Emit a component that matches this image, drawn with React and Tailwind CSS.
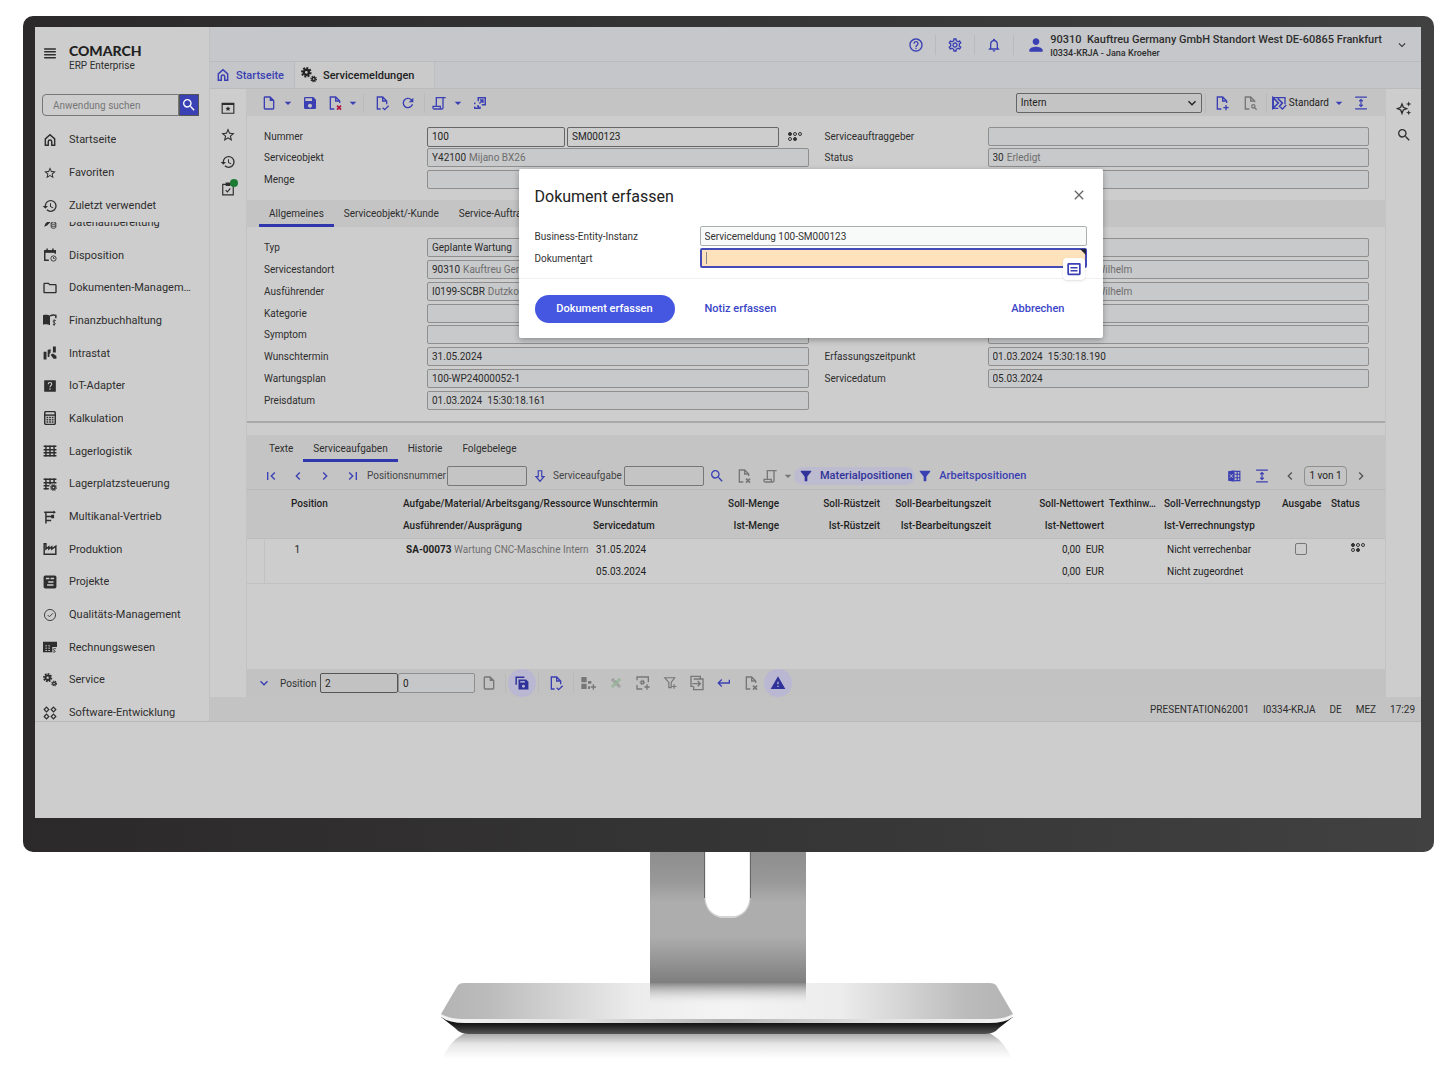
import React, { useState } from 'react';
import clsx from 'clsx';
import {
  MdArrowDropDown,
  MdChevronLeft,
  MdChevronRight,
  MdClose,
  MdExpandMore,
  MdFilterAlt,
  MdFirstPage,
  MdHelpOutline,
  MdHistory,
  MdKeyboardReturn,
  MdLastPage,
  MdNotificationsNone,
  MdOutlineFolder,
  MdOutlineInsertDriveFile,
  MdOutlineSettings,
  MdPerson,
  MdRefresh,
  MdSave,
  MdSearch,
  MdStarBorder,
  MdWarning,
} from 'react-icons/md';

function Gear({ cx, cy, r }) {
  return (
    <g fill="none">
      <circle cx={cx} cy={cy} r={r * 0.8} strokeWidth={r * 0.75} />
      <circle cx={cx} cy={cy} r={r * 1.35} strokeWidth={r * 0.6} pathLength="16" strokeDasharray="1.2 0.8" />
    </g>
  );
}

// all glyphs live on a 24 x 24 grid
const glyphs = {
  menu: <path d="M2 5h20M2 10h20M2 15h20M2 20h20" />,
  home: <path d="M4 21V10l8-7 8 7v11h-5v-6a3 3 0 0 0-6 0v6z" />,
  dataPrep: (
    <>
      <path d="M2 20l2-5L13 6l3 3-9 9z" fill="currentColor" stroke="none" />
      <ellipse cx="18" cy="14" rx="4" ry="2" strokeWidth="1.500" />
      <path d="M14 14v7c0 2.400 8 2.400 8 0v-7M14 18c0 2 8 2 8 0" strokeWidth="1.500" />
    </>
  ),
  calendarClock: (
    <>
      <path d="M10 21H3V5h18v5M7 1v4M17 1v4" />
      <path d="M3 5h18v2H3z" fill="currentColor" />
      <circle cx="18" cy="18" r="4.500" strokeWidth="1.500" />
      <path d="M18 15.500V18h2" strokeWidth="1.500" />
    </>
  ),
  ledger: (
    <>
      <path d="M0 4c4-1.500 9-1 12 1v16c-3-2-8-2-12-1z" fill="currentColor" stroke="none" />
      <path d="M12 5c3-1.500 6-2 10-1v5" />
      <path d="M22 13c-4-2-6 2-3 3s3 5-2 3.500M19 11v11" strokeWidth="1.500" />
    </>
  ),
  intrastat: (
    <g fill="currentColor" stroke="none">
      <path d="M1 10h5v13H1zM8 7l5-2v6l-2 3v5H8zM17 1h5v10h-5zM13 15l4-2 6 4v5h-5z" />
    </g>
  ),
  question: (
    <>
      <rect x="2" y="2" width="20" height="20" rx="1" fill="currentColor" stroke="none" />
      <path d="M9 9c0-4 6-4 6 0 0 2-3 2-3 5M12 16v2.500" stroke="#cdcdcd" strokeWidth="2" />
    </>
  ),
  calculator: (
    <>
      <rect x="3" y="1" width="18" height="22" rx="2" />
      <path d="M3 7h18" />
      <path d="M6 11h12M6 15h12M6 19h12" strokeDasharray="3 1.500" strokeWidth="2.500" />
    </>
  ),
  grid: <path d="M5 2v20M12 2v20M19 2v20M1 4h22M1 10h22M1 15h22M1 20h22" />,
  gridGear: (
    <>
      <path d="M5 2v20M12 2v11M19 2v9M1 4h22M1 10h22M1 15h10M1 20h9" />
      <Gear cx={18} cy={18} r={3.500} />
    </>
  ),
  tree: (
    <>
      <path d="M5 3v20M2 4h18M5 11h11M5 18h9" />
      <path d="M18 1l4 3-4 3zM14 8h5v6h-5z" fill="currentColor" stroke="none" />
    </>
  ),
  factory: <path d="M2 3h3v9l5-4v4l5-4v4l7-5v14H2z" />,
  projects: (
    <>
      <rect x="1" y="1" width="22" height="22" rx="3" fill="currentColor" stroke="none" />
      <path d="M5 6h6M13 6h6M9 12h9M7 17h11" stroke="#cdcdcd" strokeWidth="2.500" />
    </>
  ),
  quality: (
    <>
      <circle cx="12" cy="12" r="9.500" strokeWidth="1.500" />
      <path d="M8 12l3 3 6-6" strokeWidth="1.500" />
    </>
  ),
  accounting: (
    <>
      <path d="M0 3h24v9h-8v9H0z" fill="currentColor" stroke="none" />
      <path d="M4 10h3M9 10h3M4 14h3M9 14h3M4 18h3M9 18h3" stroke="#cdcdcd" strokeWidth="1.500" />
      <path d="M22 15c-4-1.500-6 1.500-3 2.500s3 4-2 3" strokeWidth="1.500" />
    </>
  ),
  gears: (
    <>
      <Gear cx={8} cy={8} r={4.800} />
      <Gear cx={19} cy={18} r={3} />
    </>
  ),
  modules: (
    <g strokeWidth="2">
      <path d="M6 2l4 4-4 4-4-4zM18 2l4 4-4 4-4-4zM6 14l4 4-4 4-4-4zM18 14l4 4-4 4-4-4z" />
    </g>
  ),
  windowStar: (
    <>
      <path d="M2 4h20v17H2zM2 6h20" />
      <path d="M12 9l1.300 2.700 3 .3-2.200 2 .6 3-2.700-1.500L9.300 17l.6-3-2.200-2 3-.3z" fill="currentColor" stroke="none" />
    </>
  ),
  clipboard: (
    <>
      <path d="M3 4h18v18H3zM9 2h6v4H9z" />
      <path d="M8 14l3 3 5-6" />
    </>
  ),
  fileX: (
    <>
      <path d="M11 21H5V3h8l6 6v3M13 3v6h6" />
      <path d="M15 16l6 6M21 16l-6 6" className="stroke-(--mark)" strokeWidth="2.500" />
    </>
  ),
  fileCheck: <path d="M10 21H5V3h8l6 6v5M13 3v6h6M13 19l3 3 6-6" />,
  filePlus: <path d="M11 21H5V3h8l6 6v3M13 3v6h6M18 15v8M14 19h8" />,
  fileSearch: (
    <>
      <path d="M11 21H5V3h8l6 6v2M13 3v6h6M19 19l3 3" />
      <circle cx="17" cy="17" r="2.500" />
    </>
  ),
  scroll: <path d="M8 17V4h14M18 4v15a2 2 0 0 1-2 2H5a2 2 0 0 1-2-2v-2h11v4" />,
  popOut: <path d="M9 9V3h12v12h-6M11 13l6-6M12 7h5v5M3 11v3M3 18v3h6v-4H7M9 21h3v-3" />,
  fitHeight: <path d="M2 2h20M2 22h20M12 6v12M9 9l3-3 3 3M9 15l3 3 3-3" />,
  layout: (
    <>
      <path d="M3 4h18v10M3 4v16h8M14 18l3 3 6-6" />
      <path d="M3 4l8 8-8 8zM10 5l7 7-5 6" strokeWidth="2.500" />
    </>
  ),
  funnelPlus: <path d="M3 3h17l-6 8v9h-4v-9zM19 14v8M15 18h8" />,
  sparkles: (
    <>
      <path d="M9 6l2 5 5 2-5 2-2 5-2-5-5-2 5-2z" />
      <path d="M19 2l1 3 3 1-3 1-1 3-1-3-3-1 3-1zM19 15l1 3 3 1-3 1-1 3-1-3-3-1 3-1z" fill="currentColor" stroke="none" />
    </>
  ),
  arrowDown: <path d="M9 3h6v10h4l-7 8-7-8h4z" />,
  excel: (
    <>
      <path d="M2 4l11-2v20L2 20z" fill="currentColor" stroke="none" />
      <path d="M13 4h9v16h-9M13 9h9M13 15h9M17.500 4v16" />
      <path d="M5 9l5 6M10 9l-5 6" stroke="#c4c4c4" strokeWidth="1.500" />
    </>
  ),
  saveAll: (
    <>
      <path d="M2 15V2h14" strokeWidth="2.500" />
      <path d="M6 6h13l4 4v13H6z" fill="currentColor" stroke="none" />
      <path d="M9 10h8" stroke="#bab7d2" strokeWidth="2.500" />
      <circle cx="14.500" cy="17.500" r="2.500" fill="#bab7d2" stroke="none" />
    </>
  ),
  blocksPlus: (
    <>
      <path d="M2 3h8v8H2zM2 13h8v8H2zM12 9h5v4h-5zM12 17h3v4h-3z" fill="currentColor" stroke="none" />
      <path d="M20 14v8M16 18h8" />
    </>
  ),
  cross: (
    <>
      <path d="M4 4l16 16" stroke="#9a9a9a" strokeWidth="6" strokeDasharray="4 1" />
      <path d="M20 4L4 20" stroke="#93b394" strokeWidth="6" strokeDasharray="4 1" />
    </>
  ),
  gearPlus: (
    <>
      <path d="M3 8V3h17v8M3 15v6h8M18 14v8M14 18h8" />
      <Gear cx={11} cy={11} r={2.500} />
    </>
  ),
  copyInto: <path d="M17 5V2H3v15h3M7 6h14v16H7v-5M5 13h11M13 9l4 4-4 4" />,
  list: (
    <>
      <rect x="2" y="3" width="20" height="18" rx="1" strokeWidth="3" />
      <path d="M6 10h12M6 15h12" strokeWidth="2.500" />
    </>
  ),
};

function Icon({ name, className = 'size-4' }) {
  return (
    <svg viewBox="0 0 24 24" fill="none" stroke="currentColor" strokeWidth="2" className={clsx('shrink-0', className)} aria-hidden="true">
      {glyphs[name]}
    </svg>
  );
}

function StatusDots() {
  return (
    <svg viewBox="0 0 14 9" className="h-[9px] w-3.5 shrink-0" fill="none" stroke="#333" aria-hidden="true">
      <circle cx="2" cy="2" r="1.500" fill="#333" />
      <circle cx="7" cy="2" r="1.500" />
      <circle cx="12" cy="2" r="1.500" />
      <circle cx="2" cy="7" r="1.500" />
      <circle cx="7" cy="7" r="1.500" fill="#333" />
    </svg>
  );
}

function ToolButton({ label, className = 'w-7', children }) {
  return (
    <button type="button" aria-label={label} className={clsx('flex shrink-0 items-center justify-center', className)}>
      {children}
    </button>
  );
}

function Separator() {
  return <span className="h-5 w-px shrink-0 bg-[#bababa]" />;
}

const topLinks = [
  { label: 'Startseite', icon: <Icon name="home" className="size-3.5 stroke-[2.5]" /> },
  { label: 'Favoriten', icon: <MdStarBorder className="size-3.5" /> },
  { label: 'Zuletzt verwendet', icon: <MdHistory className="size-4 shrink-0" /> },
];

const modules = [
  { label: 'Datenaufbereitung', icon: 'dataPrep' },
  { label: 'Disposition', icon: 'calendarClock' },
  { label: 'Dokumenten-Management', icon: 'folder' },
  { label: 'Finanzbuchhaltung', icon: 'ledger' },
  { label: 'Intrastat', icon: 'intrastat' },
  { label: 'IoT-Adapter', icon: 'question' },
  { label: 'Kalkulation', icon: 'calculator' },
  { label: 'Lagerlogistik', icon: 'grid' },
  { label: 'Lagerplatzsteuerung', icon: 'gridGear' },
  { label: 'Multikanal-Vertrieb', icon: 'tree' },
  { label: 'Produktion', icon: 'factory' },
  { label: 'Projekte', icon: 'projects' },
  { label: 'Qualitäts-Management', icon: 'quality' },
  { label: 'Rechnungswesen', icon: 'accounting' },
  { label: 'Service', icon: 'gears' },
  { label: 'Software-Entwicklung', icon: 'modules' },
];

function NavLink({ label, icon }) {
  return (
    <a href="#" className="flex items-center gap-3 pr-3.5 pl-2">
      <span className="flex w-3.5 shrink-0 justify-center">{icon}</span>
      <span className="truncate pt-px leading-4">{label}</span>
    </a>
  );
}

function Sidebar() {
  return (
    <aside className="flex w-[175px] shrink-0 flex-col border-r border-[#bfc0c2] text-[11px] text-[#2e2e2e]">
      <div className="flex gap-3 pt-4 pl-2">
        <ToolButton label="Menü" className="mt-[3px] size-3.5">
          <Icon name="menu" className="size-3.5 stroke-[2.5]" />
        </ToolButton>
        <div>
          <div className="font-[Lato,sans-serif] text-[14px] leading-4 font-black text-[#222]">COMARCH</div>
          <div className="text-[10px] leading-[14px]">ERP Enterprise</div>
        </div>
      </div>
      <form className="mt-[21px] mr-2.5 ml-[7px] flex h-[22px]" onSubmit={(e) => e.preventDefault()}>
        <input
          type="text"
          aria-label="Anwendung suchen"
          placeholder="Anwendung suchen"
          className="min-w-0 flex-1 rounded-l-sm border border-[#777] px-2.5 text-[10px] placeholder:text-[#777]"
        />
        <button type="submit" aria-label="Suchen" className="flex w-5 items-center justify-center border border-[#555] bg-[#3a41b4] text-white">
          <MdSearch className="size-4" />
        </button>
      </form>
      <nav className="mt-[7px] grid h-[99px] shrink-0 auto-rows-fr grid-cols-1">
        {topLinks.map((link) => (
          <NavLink key={link.label} {...link} />
        ))}
      </nav>
      {/* the module list is scrolled a little, so its first row is cut off */}
      <div className="h-0 grow overflow-hidden">
        <nav className="-mt-4 grid h-[523px] auto-rows-fr grid-cols-1">
          {modules.map(({ label, icon }) => (
            <NavLink
              key={label}
              label={label}
              icon={icon === 'folder' ? <MdOutlineFolder className="size-4 shrink-0" /> : <Icon name={icon} className="size-3.5 stroke-[2.5]" />}
            />
          ))}
        </nav>
      </div>
    </aside>
  );
}

function TopBar() {
  return (
    <header className="flex h-[35px] items-center justify-end border-b border-[#b9bbbe] bg-[#c5c7ca] pt-0.5 text-[#3a3fb3]">
      <ToolButton label="Hilfe" className="w-[38px]">
        <MdHelpOutline className="size-4" />
      </ToolButton>
      <Separator />
      <ToolButton label="Einstellungen" className="w-[38px]">
        <MdOutlineSettings className="size-4" />
      </ToolButton>
      <Separator />
      <ToolButton label="Benachrichtigungen" className="w-[38px]">
        <MdNotificationsNone className="size-4" />
      </ToolButton>
      <Separator />
      <MdPerson className="ml-3 size-5 shrink-0" />
      <div className="ml-1 pt-0.5 font-medium text-[#2e2e2e]">
        <div className="text-[11px] leading-[14px] whitespace-pre">90310  Kauftreu Germany GmbH Standort West DE-60865 Frankfurt</div>
        <div className="text-[9px] leading-3">I0334-KRJA - Jana Kroeher</div>
      </div>
      <ToolButton label="Benutzermenü" className="w-[39px] text-[#333]">
        <MdExpandMore className="size-3.5" />
      </ToolButton>
    </header>
  );
}

function WindowTabs() {
  return (
    <nav className="flex h-[27px] border-b border-[#b9bbbe] bg-[#c4c6c9] text-[11px] font-medium">
      <a href="#" className="flex w-[85px] items-center gap-1.5 border-r border-[#b9bbbe] pl-1.5 text-[#3a3fb3]">
        <Icon name="home" className="size-3.5 stroke-[2.5]" />
        <span className="pt-0.5 leading-4">Startseite</span>
      </a>
      <a href="#" className="flex w-[140px] items-center gap-1.5 border-r border-[#bfc0c2] bg-[#cacaca] pl-1.5 text-[#222]">
        <Icon name="gears" className="size-4" />
        <span className="pt-0.5 leading-4">Servicemeldungen</span>
      </a>
    </nav>
  );
}

function FormToolbar() {
  const [view, setView] = useState('Intern');

  return (
    <div className="flex h-[27px] items-center bg-[#c4c4c4] pl-2 text-[#3a3fb3]">
      <ToolButton label="Neu"><MdOutlineInsertDriveFile className="size-4" /></ToolButton>
      <ToolButton label="Neu, Optionen" className="w-2.5"><MdArrowDropDown className="size-4 shrink-0" /></ToolButton>
      <ToolButton label="Speichern" className="w-[34px]"><MdSave className="size-4" /></ToolButton>
      <ToolButton label="Löschen" className="w-4 [--mark:#b3123c]"><Icon name="fileX" /></ToolButton>
      <ToolButton label="Löschen, Optionen" className="w-5"><MdArrowDropDown className="size-4" /></ToolButton>
      <Separator />
      <ToolButton label="Prüfen" className="w-9"><Icon name="fileCheck" /></ToolButton>
      <ToolButton label="Aktualisieren" className="mr-2 w-4"><MdRefresh className="size-4" /></ToolButton>
      <Separator />
      <ToolButton label="Ausgabe"><Icon name="scroll" /></ToolButton>
      <ToolButton label="Ausgabe, Optionen" className="w-2.5"><MdArrowDropDown className="size-4 shrink-0" /></ToolButton>
      <ToolButton label="Absprung" className="w-[34px]"><Icon name="popOut" className="size-3.5 stroke-[2.5]" /></ToolButton>

      <div className="relative mr-[3px] ml-auto">
        <select
          aria-label="Ansicht"
          value={view}
          onChange={(e) => setView(e.target.value)}
          className="block h-5 w-[186px] appearance-none rounded-xs border border-[#666] px-1 text-[10px] text-[#222]"
        >
          <option>Intern</option>
        </select>
        <MdExpandMore className="pointer-events-none absolute top-0.5 right-0.5 size-4 text-[#222]" />
      </div>
      <Separator />
      <ToolButton label="Ansicht anlegen" className="w-8"><Icon name="filePlus" /></ToolButton>
      <ToolButton label="Ansicht suchen" className="w-6 text-[#777]"><Icon name="fileSearch" /></ToolButton>
      <span className="w-1" />
      <Separator />
      <button type="button" className="ml-1 flex items-center gap-0.5 text-[10px]">
        <Icon name="layout" />
        <span className="text-[#222]">Standard</span>
        <MdArrowDropDown className="size-4" />
      </button>
      <ToolButton label="Höhe anpassen" className="mr-2.5 w-7"><Icon name="fitHeight" className="size-3.5" /></ToolButton>
    </div>
  );
}

const boxStyle = 'h-[19px] rounded-xs border border-[#8f8f8f] bg-[#c8c9ca] px-1';

// a code followed by its grey description, or a plain value
function Field({ id, label, code, text, hint, offset }) {
  return (
    <>
      <label htmlFor={id}>{label}</label>
      <div className={clsx(boxStyle, 'flex items-center gap-[3px] overflow-hidden whitespace-nowrap', offset)}>
        {code ? (
          <>
            <input id={id} readOnly defaultValue={code} aria-label={hint} className="field-sizing-content text-[#2b2b2b]" />
            <span className="text-[#6d6d6d]">{text}</span>
          </>
        ) : (
          <input id={id} readOnly defaultValue={text} aria-label={hint} className={clsx('w-full min-w-0', offset ? 'text-[#6d6d6d]' : 'text-[#2b2b2b]')} />
        )}
      </div>
    </>
  );
}

const headLeft = [
  { id: 'serviceobjekt', label: 'Serviceobjekt', code: 'Y42100', text: 'Mijano BX26' },
  { id: 'menge', label: 'Menge' },
];

const headRight = [
  { id: 'auftraggeber', label: 'Serviceauftraggeber' },
  { id: 'status', label: 'Status', code: '30', text: 'Erledigt' },
  { id: 'status-zusatz', hint: 'Status' },
];

const detailLeft = [
  { id: 'typ', label: 'Typ', text: 'Geplante Wartung' },
  { id: 'standort', label: 'Servicestandort', code: '90310', text: 'Kauftreu Germany GmbH' },
  { id: 'ausfuehrender', label: 'Ausführender', code: 'I0199-SCBR', text: 'Dutzkow' },
  { id: 'kategorie', label: 'Kategorie' },
  { id: 'symptom', label: 'Symptom' },
  { id: 'wunschtermin', label: 'Wunschtermin', text: '31.05.2024' },
  { id: 'wartungsplan', label: 'Wartungsplan', text: '100-WP24000052-1' },
  { id: 'preisdatum', label: 'Preisdatum', text: '01.03.2024  15:30:18.161' },
];

const detailRight = [
  { id: 'typ-2', hint: 'Typ' },
  { id: 'standort-2', hint: 'Servicestandort', text: 'Wilhelm', offset: 'pl-[108px]' },
  { id: 'ausfuehrender-2', hint: 'Ausführender', text: 'Wilhelm', offset: 'pl-[108px]' },
  { id: 'kategorie-2', hint: 'Kategorie' },
  { id: 'symptom-2', hint: 'Symptom' },
  { id: 'erfassung', label: 'Erfassungszeitpunkt', text: '01.03.2024  15:30:18.190' },
  { id: 'servicedatum', label: 'Servicedatum', text: '05.03.2024' },
];

function TabBar({ tabs, active, onChange, label }) {
  return (
    <div role="tablist" aria-label={label} className="flex h-[27px] bg-[#c4c4c4] pl-3">
      {tabs.map((tab) => (
        <button
          key={tab}
          type="button"
          role="tab"
          aria-selected={tab === active}
          onClick={() => onChange(tab)}
          className={clsx('border-b-3 px-2.5 pt-[3px] whitespace-nowrap', tab === active ? 'border-[#3036ab]' : 'border-transparent')}
        >
          {tab}
        </button>
      ))}
    </div>
  );
}

function HeadForm() {
  return (
    <div className="grid grid-cols-2 gap-x-4 py-2.5 pr-4 pl-[17px]">
      <div className="grid h-16 auto-rows-fr grid-cols-[163px_1fr] items-center">
        <label htmlFor="nummer">Nummer</label>
        <div className="flex items-center gap-0.5">
          <input id="nummer" defaultValue="100" className="h-5 w-[138px] rounded-xs border border-[#666] px-1 text-[#222]" />
          <input aria-label="Nummer, laufend" defaultValue="SM000123" className="h-5 min-w-0 flex-1 rounded-xs border border-[#666] px-1 text-[#222]" />
          <span className="flex w-7 justify-center"><StatusDots /></span>
        </div>
        {headLeft.map((field) => <Field key={field.id} {...field} />)}
      </div>
      <div className="grid h-16 auto-rows-fr grid-cols-[163px_1fr] items-center">
        {headRight.map((field) => <Field key={field.id} {...field} />)}
      </div>
    </div>
  );
}

function DetailForm() {
  return (
    <div className="grid grid-cols-2 gap-x-4 py-2.5 pr-4 pl-[17px]">
      <div className="grid h-[174px] grid-cols-[163px_1fr] grid-rows-8 items-center">
        {detailLeft.map((field) => <Field key={field.id} {...field} />)}
      </div>
      <div className="grid h-[174px] grid-cols-[163px_1fr] grid-rows-8 items-center">
        {detailRight.map((field) => <Field key={field.id} {...field} />)}
      </div>
    </div>
  );
}

function ListToolbar() {
  return (
    <div className="flex h-7 items-center border-b border-[#b9babb] bg-[#c4c4c4] pl-2.5 text-[#3a3fb3]">
      <ToolButton label="Erste"><MdFirstPage className="size-4" /></ToolButton>
      <ToolButton label="Vorherige" className="w-[26px]"><MdChevronLeft className="size-4" /></ToolButton>
      <ToolButton label="Nächste"><MdChevronRight className="size-4" /></ToolButton>
      <ToolButton label="Letzte"><MdLastPage className="size-4" /></ToolButton>
      <label htmlFor="positionsnummer" className="w-20 shrink-0 text-[#444]">Positionsnummer</label>
      <input id="positionsnummer" className="h-5 w-20 shrink-0 rounded-xs border border-[#777]" />
      <ToolButton label="Gehe zu" className="w-[26px]"><Icon name="arrowDown" className="size-3.5" /></ToolButton>
      <label htmlFor="serviceaufgabe" className="w-[71px] shrink-0 text-[#444]">Serviceaufgabe</label>
      <input id="serviceaufgabe" className="h-5 w-20 shrink-0 rounded-xs border border-[#777]" />
      <ToolButton label="Suchen" className="w-[26px]"><MdSearch className="size-4" /></ToolButton>
      <ToolButton label="Position löschen" className="w-7 text-[#777] [--mark:#777]"><Icon name="fileX" /></ToolButton>
      <ToolButton label="Ausgabe" className="w-6 text-[#777]"><Icon name="scroll" /></ToolButton>
      <ToolButton label="Ausgabe, Optionen" className="w-3 text-[#777]"><MdArrowDropDown className="size-4 shrink-0" /></ToolButton>
      <button type="button" className="flex h-[18px] items-center gap-1.5 rounded-full bg-[#bdbbd0] pr-[3px] pl-1 text-[11px] font-medium text-[#2f3399]">
        <MdFilterAlt className="size-4" />
        <span className="pt-px leading-4">Materialpositionen</span>
      </button>
      <button type="button" className="ml-0.5 flex items-center gap-1.5 text-[11px] font-medium">
        <MdFilterAlt className="size-4" />
        <span className="pt-px leading-4">Arbeitspositionen</span>
      </button>
      <ToolButton label="Excel-Export" className="ml-auto w-7"><Icon name="excel" className="size-3.5" /></ToolButton>
      <ToolButton label="Höhe anpassen"><Icon name="fitHeight" className="size-3.5" /></ToolButton>
      <ToolButton label="Vorherige Seite" className="w-7 text-[#555]"><MdChevronLeft className="size-4" /></ToolButton>
      <span className="flex h-5 w-[43px] items-center justify-center rounded-sm border border-[#8f8f8f] text-[#222]">1 von 1</span>
      <ToolButton label="Nächste Seite" className="mr-2.5 w-7 text-[#555]"><MdChevronRight className="size-4" /></ToolButton>
    </div>
  );
}

const columns = [
  { key: 'handle', width: 'w-[17px]' },
  { key: 'position', width: 'w-[139px]', head: ['Position'], cell: 'text-left pl-[27px]' },
  { key: 'aufgabe', width: 'w-[190px]', head: ['Aufgabe/Material/Arbeitsgang/Ressource', 'Ausführender/Ausprägung'] },
  { key: 'termin', width: 'w-[98px]', head: ['Wunschtermin', 'Servicedatum'] },
  { key: 'menge', width: 'w-[88px]', head: ['Soll-Menge', 'Ist-Menge'], cell: 'text-right' },
  { key: 'ruestzeit', width: 'w-[101px]', head: ['Soll-Rüstzeit', 'Ist-Rüstzeit'], cell: 'text-right' },
  { key: 'bearbeitung', width: 'w-[111px]', head: ['Soll-Bearbeitungszeit', 'Ist-Bearbeitungszeit'], cell: 'text-right' },
  { key: 'nettowert', width: 'w-[113px]', head: ['Soll-Nettowert', 'Ist-Nettowert'], cell: 'text-right' },
  { key: 'text', width: 'w-[60px]', head: ['Texthinw…'], cell: 'text-left pl-[5px]' },
  { key: 'verrechnung', width: 'w-[118px]', head: ['Soll-Verrechnungstyp', 'Ist-Verrechnungstyp'] },
  { key: 'ausgabe', width: 'w-[38px]', head: ['Ausgabe'], cell: 'text-center' },
  { key: 'status', width: 'w-[65px]', head: ['Status'], cell: 'text-left pl-[11px]' },
];

function PositionTable() {
  return (
    <div className="min-h-[179px]">
      <table className="w-full table-fixed leading-[22px] whitespace-nowrap text-[#1f1f1f]">
        <thead>
          <tr className="border-b border-[#bcbcbc] bg-[#c4c4c4] align-top">
            {columns.map(({ key, width, head = [], cell = 'text-left' }) => (
              <th key={key} scope="col" className={clsx('pt-[3px] pb-px font-medium', width, cell)}>
                {head.map((line) => <div key={line}>{line}</div>)}
              </th>
            ))}
          </tr>
        </thead>
        <tbody>
          <tr className="border-b border-[#bfc1c3] align-top">
            <td className="border-r border-[#bfc1c3]" />
            <td className="pl-[30px]">1</td>
            <td className="pl-[3px]">
              <span className="font-bold">SA-00073</span> <span className="text-[#6d6d6d]">Wartung CNC-Maschine Intern</span>
            </td>
            <td className="pl-[3px]">31.05.2024<br />05.03.2024</td>
            <td />
            <td />
            <td />
            <td className="text-right whitespace-pre">{'0,00  EUR\n0,00  EUR'}</td>
            <td />
            <td className="pl-[3px]">Nicht verrechenbar<br />Nicht zugeordnet</td>
            <td>
              <input
                type="checkbox"
                aria-label="Ausgabe"
                className="mx-auto mt-1 block size-3 appearance-none rounded-xs border border-[#777]"
              />
            </td>
            <td><span className="flex justify-center pt-1 pl-2.5"><StatusDots /></span></td>
          </tr>
        </tbody>
      </table>
    </div>
  );
}

function PositionBar() {
  return (
    <div className="flex h-7 items-center bg-[#c2c2c2] pl-[3px] text-[#777] [--mark:#777]">
      <ToolButton label="Aufklappen" className="w-7 text-[#3a3fb3]"><MdExpandMore className="size-4" /></ToolButton>
      <label htmlFor="position" className="w-[42px] pl-0.5 text-[#333]">Position</label>
      <input id="position" defaultValue="2" className="h-5 w-[78px] rounded-xs border border-[#555] px-1 text-[#222]" />
      <input aria-label="Unterposition" defaultValue="0" className="h-5 w-[77px] rounded-xs border border-[#8f8f8f] bg-[#c6c7c8] px-1 text-[#222]" />
      <ToolButton label="Neu"><MdOutlineInsertDriveFile className="size-4" /></ToolButton>
      <span className="w-0.5" />
      <Separator />
      <ToolButton label="Alle speichern" className="mx-0.5 size-7 rounded-full bg-[#bab7d2] text-[#2f3399]"><Icon name="saveAll" className="size-3.5" /></ToolButton>
      <Separator />
      <ToolButton label="Prüfen" className="w-[34px] text-[#3a3fb3]"><Icon name="fileCheck" /></ToolButton>
      <Separator />
      <ToolButton label="Struktur einfügen"><Icon name="blocksPlus" /></ToolButton>
      <ToolButton label="Struktur lösen"><Icon name="cross" className="size-3" /></ToolButton>
      <ToolButton label="Arbeitsgang einfügen" className="w-[26px]"><Icon name="gearPlus" /></ToolButton>
      <ToolButton label="Filter einfügen"><Icon name="funnelPlus" className="size-3.5" /></ToolButton>
      <ToolButton label="Kopieren" className="w-[26px]"><Icon name="copyInto" /></ToolButton>
      <ToolButton label="Übernehmen" className="w-7 text-[#3a3fb3]"><MdKeyboardReturn className="size-4" /></ToolButton>
      <ToolButton label="Löschen" className="w-[26px]"><Icon name="fileX" /></ToolButton>
      <ToolButton label="Meldungen" className="size-7 rounded-full bg-[#bab7d2] text-[#2f3399]"><MdWarning className="size-4" /></ToolButton>
    </div>
  );
}

function DocumentDialog() {
  return (
    <div className="pointer-events-none absolute inset-0 flex items-start justify-center pt-[142px] pr-2.5">
      <div
        role="dialog"
        aria-labelledby="dialog-title"
        className="pointer-events-auto w-[584px] rounded-xs bg-white text-[10px] text-[#333] shadow-[0_2px_6px_rgba(0,0,0,0.3)]"
      >
        <div className="flex items-center justify-between px-4 pt-4">
          <h2 id="dialog-title" className="text-[16px] leading-6 text-[#222]">Dokument erfassen</h2>
          <ToolButton label="Schließen" className="mb-1 size-4 text-[#666]"><MdClose className="size-4" /></ToolButton>
        </div>
        <div className="grid grid-cols-[165px_1fr] items-center gap-y-0.5 border-b border-[#f0f0f0] px-4 pt-[17px] pb-2.5">
          <label htmlFor="entity">Business-Entity-Instanz</label>
          <input id="entity" readOnly defaultValue="Servicemeldung 100-SM000123" className="h-5 rounded-xs border border-[#aab0b0] bg-[#f8faf9] px-1" />
          <label htmlFor="dokumentart">Dokument<u>a</u>rt</label>
          <div className="relative flex h-5 items-center rounded-xs border-2 border-[#444bb8] bg-[#fde2bb] px-1">
            <span className="h-3 w-px bg-[#888]" />
            <input id="dokumentart" className="h-full w-full outline-none" />
            <svg viewBox="0 0 6 6" className="absolute -top-px -right-px size-1.5" aria-hidden="true">
              <path d="M0 0h6v6z" fill="#22253a" />
            </svg>
            <button type="button" aria-label="Auswahlliste" className="absolute top-2 right-0 flex size-[22px] items-center justify-center rounded-sm bg-white text-[#3a3fb3] shadow-sm">
              <Icon name="list" className="size-3.5" />
            </button>
          </div>
        </div>
        <div className="flex items-center px-4 pt-4 pb-[15px] text-[11px] font-medium text-[#3a46c8]">
          <button type="button" className="h-7 w-[140px] rounded-full bg-[#4557e0] text-white">Dokument erfassen</button>
          <button type="button" className="ml-[30px]">Notiz erfassen</button>
          <button type="button" className="mr-[22px] ml-auto">Abbrechen</button>
        </div>
      </div>
    </div>
  );
}

function StatusBar() {
  return (
    <footer className="flex h-6 items-center justify-end gap-3.5 bg-[#c3c3c3] pr-1.5">
      <span>PRESENTATION62001</span>
      <span>I0334-KRJA</span>
      <span>DE</span>
      <span>MEZ</span>
      <span>17:29</span>
    </footer>
  );
}

function Stand() {
  return (
    <svg viewBox="0 0 620 228" className="mx-auto block w-[620px] max-w-full" aria-hidden="true">
      <defs>
        <linearGradient id="neck" x1="0" y1="0" x2="0" y2="1">
          <stop offset="0" stopColor="#8e8e8e" />
          <stop offset="0.220" stopColor="#989898" />
          <stop offset="0.380" stopColor="#adadad" />
          <stop offset="0.640" stopColor="#adadad" />
          <stop offset="1" stopColor="#7d7d7d" />
        </linearGradient>
        <linearGradient id="plate" x1="0" y1="0" x2="1" y2="0">
          <stop offset="0" stopColor="#b4b4b4" />
          <stop offset="0.080" stopColor="#bbb" />
          <stop offset="0.340" stopColor="#ececec" />
          <stop offset="0.500" stopColor="#f4f4f4" />
          <stop offset="0.700" stopColor="#ececec" />
          <stop offset="0.920" stopColor="#bbb" />
          <stop offset="1" stopColor="#b4b4b4" />
        </linearGradient>
        <linearGradient id="mirror" x1="0" y1="0" x2="0" y2="1">
          <stop offset="0" stopColor="#888" />
          <stop offset="1" stopColor="#eee" stopOpacity="0" />
        </linearGradient>
        <linearGradient id="edge" x1="0" y1="0" x2="1" y2="0">
          <stop offset="0" stopColor="#f4f4f4" />
          <stop offset="0.250" stopColor="#e0e0e0" />
          <stop offset="0.500" stopColor="#b5b5b5" />
          <stop offset="0.750" stopColor="#e0e0e0" />
          <stop offset="1" stopColor="#f4f4f4" />
        </linearGradient>
        <linearGradient id="under" x1="0" y1="0" x2="0" y2="1">
          <stop offset="0.400" stopColor="#161616" />
          <stop offset="1" stopColor="#555" />
        </linearGradient>
        <linearGradient id="shade" x1="0" y1="0" x2="0" y2="1">
          <stop offset="0" stopColor="#aaa" />
          <stop offset="0.400" stopColor="#e6e6e6" />
          <stop offset="1" stopColor="#fff" />
        </linearGradient>
      </defs>
      <path d="M233 0h156v132H233z" fill="url(#neck)" />
      <path d="M287.500 0v46q1 16 16 20h14q15-4 16-20V0z" fill="#d4d4d4" />
      <path d="M288.500 0v46q1 14 14 18h16q13-4 14-18V0z" fill="#fff" />
      <path d="M287.500 0v46M333.500 0v46" stroke="#666" />
      <path d="M46 182h528q14 8 21 25H25q7-17 21-25z" fill="url(#shade)" />
      <path d="M24 165l14 11q5 6 14 6h516q9 0 14-6l14-11z" fill="url(#under)" />
      <path d="M24 161v4q8 6 24 6h524q16 0 24-6v-4z" fill="url(#edge)" />
      <path d="M41 133q2-2 6-2h526q4 0 6 2l17 29q-8 5-22 5H46q-14 0-22-5z" fill="url(#plate)" />
      <path d="M233 131h156v22H233z" fill="url(#mirror)" />
    </svg>
  );
}

function App() {
  const [formTab, setFormTab] = useState('Allgemeines');
  const [listTab, setListTab] = useState('Serviceaufgaben');

  return (
    <div className="min-h-screen bg-white pt-4 font-[Roboto,sans-serif]">
      <div className="mr-5 ml-[23px] rounded-[10px] bg-linear-to-r from-[#2b292a] to-[#414142] pt-[11px] pr-[13px] pb-[34px] pl-3">
        <div className="bg-[#cdcdcd] pb-24">
          <div className="flex border-b border-[#b9b9b9]">
            <Sidebar />
            <div className="relative flex min-w-0 flex-1 flex-col text-[10px] text-[#2e2e2e]">
              <TopBar />
              <WindowTabs />
              <div className="flex">
                <div className="flex w-[37px] shrink-0 flex-col items-center border-r border-[#c2c3c4] pt-[5px]">
                  <ToolButton label="Cockpits" className="h-[27px] w-7"><Icon name="windowStar" className="size-3.5" /></ToolButton>
                  <ToolButton label="Favoriten" className="h-[27px] w-7"><MdStarBorder className="size-4" /></ToolButton>
                  <ToolButton label="Verlauf" className="h-[27px] w-7"><MdHistory className="size-4" /></ToolButton>
                  <ToolButton label="Aufgaben" className="relative h-[27px] w-7">
                    <Icon name="clipboard" className="size-3.5" />
                    <span className="absolute top-1 right-1 size-2 rounded-full bg-[#1d7a35]" />
                  </ToolButton>
                </div>
                <main className="min-w-0 flex-1">
                  <FormToolbar />
                  <HeadForm />
                  <TabBar
                    label="Servicemeldung"
                    tabs={['Allgemeines', 'Serviceobjekt/-Kunde', 'Service-Auftrag']}
                    active={formTab}
                    onChange={setFormTab}
                  />
                  <DetailForm />
                  <div className="mb-3 h-0.5 bg-[#a9a9a9]" />
                  <TabBar
                    label="Positionen"
                    tabs={['Texte', 'Serviceaufgaben', 'Historie', 'Folgebelege']}
                    active={listTab}
                    onChange={setListTab}
                  />
                  <ListToolbar />
                  <PositionTable />
                  <PositionBar />
                </main>
                <div className="flex w-9 shrink-0 flex-col items-center border-l border-[#c2c3c4] pt-[5px]">
                  <ToolButton label="Assistent" className="h-[27px] w-7"><Icon name="sparkles" /></ToolButton>
                  <ToolButton label="Suchen" className="h-[27px] w-7"><MdSearch className="size-4" /></ToolButton>
                </div>
              </div>
              <StatusBar />
              <DocumentDialog />
            </div>
          </div>
        </div>
      </div>
      <Stand />
    </div>
  );
}

export default App;
